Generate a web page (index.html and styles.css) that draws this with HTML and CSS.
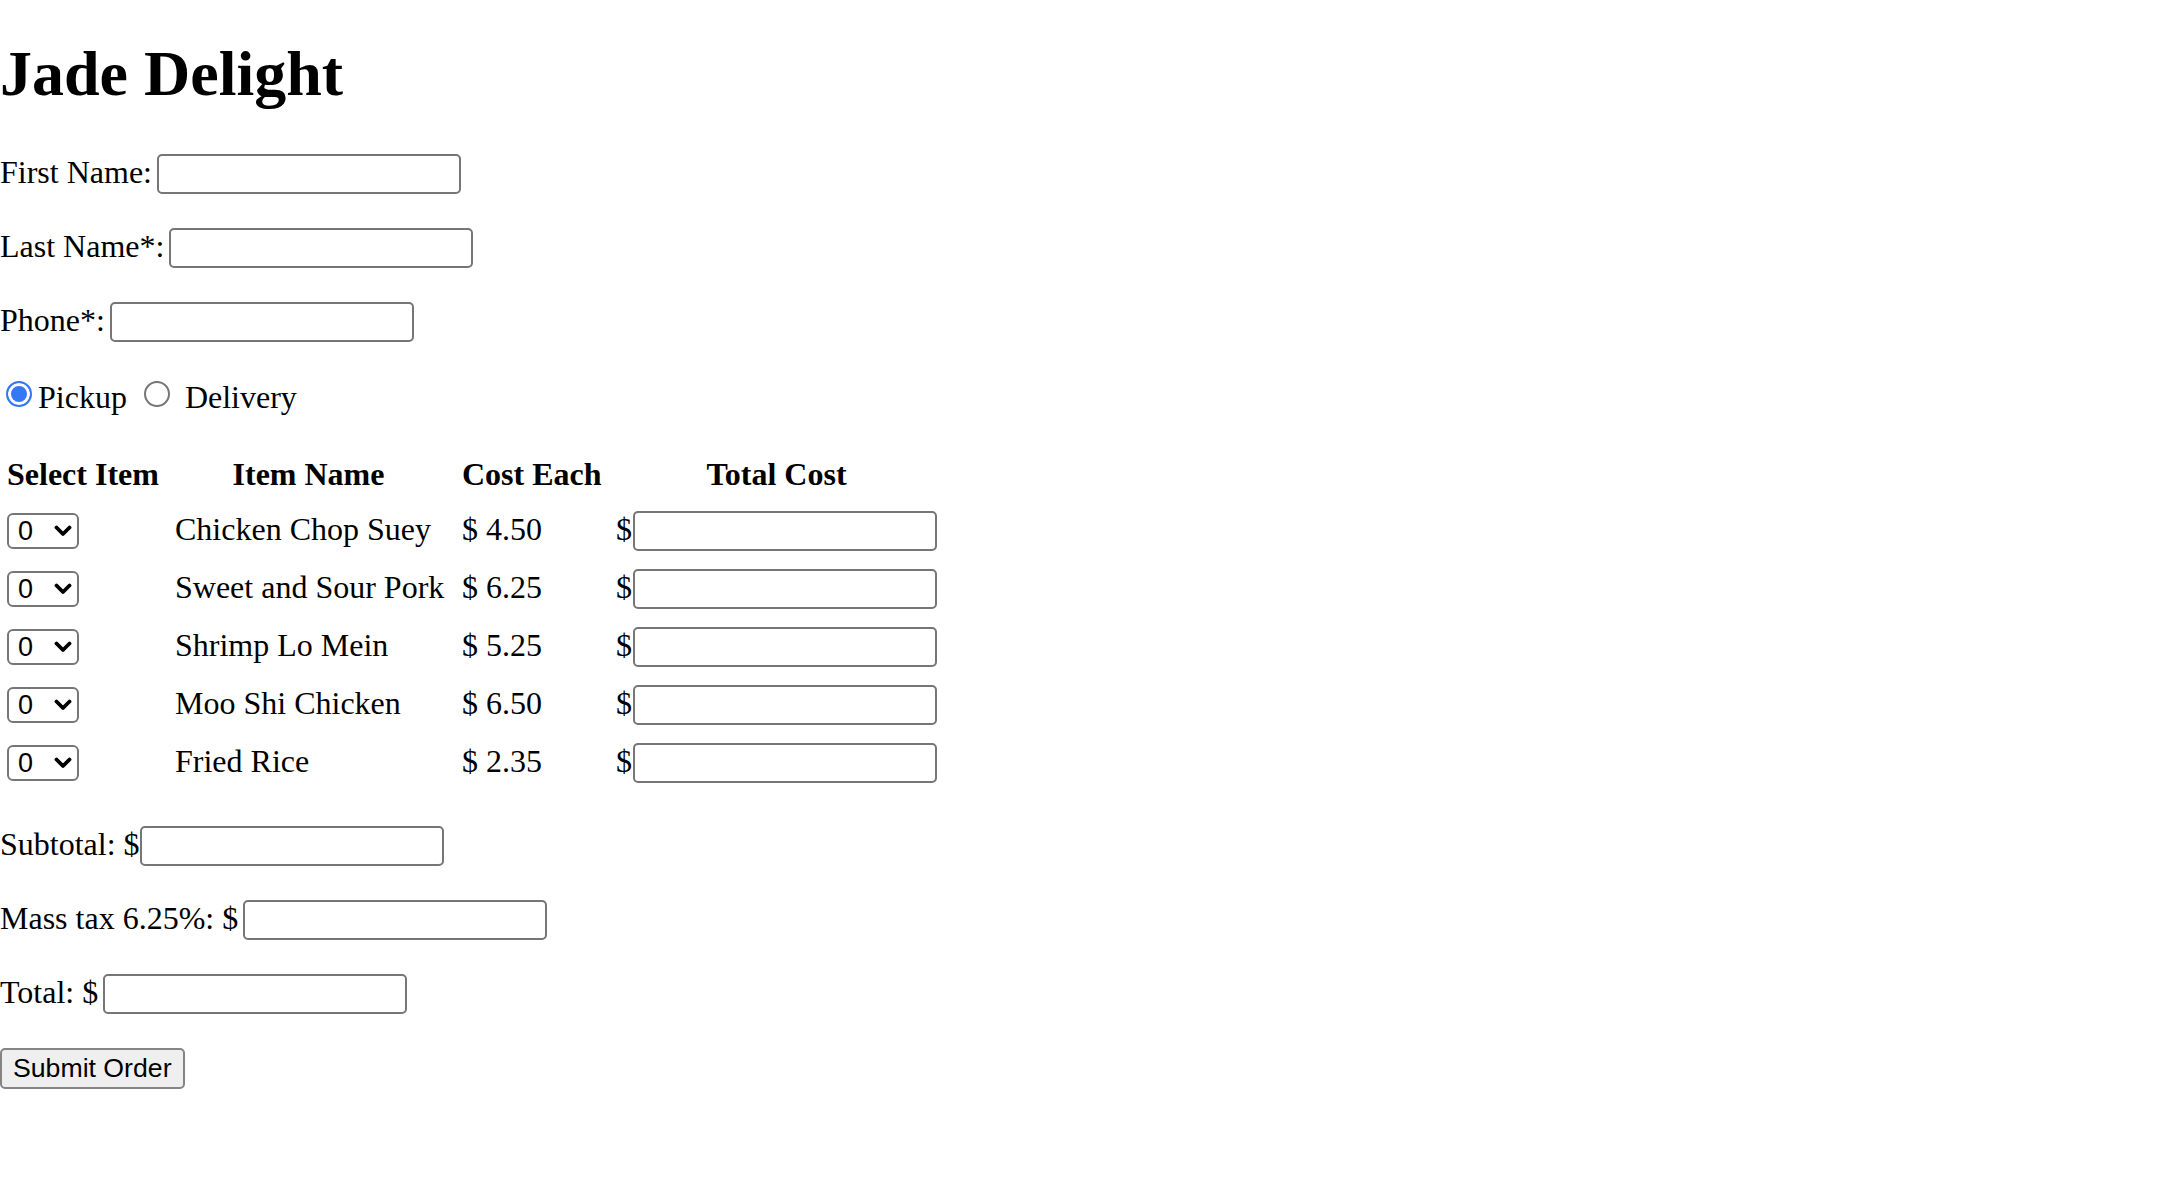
FILE: index.html
```html
<!DOCTYPE html>
<html lang="en">
<head>
<meta charset="utf-8">
<title>Jade Delight</title>
<link rel="stylesheet" href="styles.css">
</head>
<body>
<h1 class="title">Jade Delight</h1>
<form class="order">
  <div class="field">
    <label class="label" for="fname">First Name:</label>
    <input class="text-input" type="text" id="fname">
  </div>
  <div class="field">
    <label class="label" for="lname">Last Name*:</label>
    <input class="text-input" type="text" id="lname">
  </div>
  <div class="field">
    <label class="label" for="phone">Phone*:</label>
    <input class="text-input" type="text" id="phone">
  </div>
  <div class="radio-row">
    <input class="radio radio-first" type="radio" name="method" id="pickup" checked>
    <label class="radio-label" for="pickup">Pickup</label>
    <input class="radio radio-second" type="radio" name="method" id="delivery">
    <label class="radio-label" for="delivery">Delivery</label>
  </div>
  <table class="menu">
    <thead>
      <tr class="head-row">
        <th class="col-select">Select Item</th>
        <th class="col-name head-name">Item Name</th>
        <th class="col-cost">Cost Each</th>
        <th class="col-total head-total">Total Cost</th>
      </tr>
    </thead>
    <tbody>
      <tr class="item-row">
        <td class="col-select"><div class="sel"><select class="qty"><option>0</option><option>1</option><option>2</option></select><svg class="chev" width="18" height="12" viewBox="0 0 18 12"><polyline points="2.5,2.5 9,9 15.5,2.5" fill="none" stroke="#000" stroke-width="3.8" stroke-linecap="round" stroke-linejoin="round"/></svg></div></td>
        <td class="col-name cell-text">Chicken Chop Suey</td>
        <td class="col-cost cell-text">$ 4.50</td>
        <td class="col-total"><div class="total-cell"><span class="dollar">$</span><input class="text-input" type="text"></div></td>
      </tr>
      <tr class="item-row">
        <td class="col-select"><div class="sel"><select class="qty"><option>0</option><option>1</option><option>2</option></select><svg class="chev" width="18" height="12" viewBox="0 0 18 12"><polyline points="2.5,2.5 9,9 15.5,2.5" fill="none" stroke="#000" stroke-width="3.8" stroke-linecap="round" stroke-linejoin="round"/></svg></div></td>
        <td class="col-name cell-text">Sweet and Sour Pork</td>
        <td class="col-cost cell-text">$ 6.25</td>
        <td class="col-total"><div class="total-cell"><span class="dollar">$</span><input class="text-input" type="text"></div></td>
      </tr>
      <tr class="item-row">
        <td class="col-select"><div class="sel"><select class="qty"><option>0</option><option>1</option><option>2</option></select><svg class="chev" width="18" height="12" viewBox="0 0 18 12"><polyline points="2.5,2.5 9,9 15.5,2.5" fill="none" stroke="#000" stroke-width="3.8" stroke-linecap="round" stroke-linejoin="round"/></svg></div></td>
        <td class="col-name cell-text">Shrimp Lo Mein</td>
        <td class="col-cost cell-text">$ 5.25</td>
        <td class="col-total"><div class="total-cell"><span class="dollar">$</span><input class="text-input" type="text"></div></td>
      </tr>
      <tr class="item-row">
        <td class="col-select"><div class="sel"><select class="qty"><option>0</option><option>1</option><option>2</option></select><svg class="chev" width="18" height="12" viewBox="0 0 18 12"><polyline points="2.5,2.5 9,9 15.5,2.5" fill="none" stroke="#000" stroke-width="3.8" stroke-linecap="round" stroke-linejoin="round"/></svg></div></td>
        <td class="col-name cell-text">Moo Shi Chicken</td>
        <td class="col-cost cell-text">$ 6.50</td>
        <td class="col-total"><div class="total-cell"><span class="dollar">$</span><input class="text-input" type="text"></div></td>
      </tr>
      <tr class="item-row">
        <td class="col-select"><div class="sel"><select class="qty"><option>0</option><option>1</option><option>2</option></select><svg class="chev" width="18" height="12" viewBox="0 0 18 12"><polyline points="2.5,2.5 9,9 15.5,2.5" fill="none" stroke="#000" stroke-width="3.8" stroke-linecap="round" stroke-linejoin="round"/></svg></div></td>
        <td class="col-name cell-text">Fried Rice</td>
        <td class="col-cost cell-text">$ 2.35</td>
        <td class="col-total"><div class="total-cell"><span class="dollar">$</span><input class="text-input" type="text"></div></td>
      </tr>
    </tbody>
  </table>
  <div class="field field-flush">
    <label class="label" for="subtotal">Subtotal: $</label>
    <input class="text-input" type="text" id="subtotal">
  </div>
  <div class="field">
    <label class="label" for="tax">Mass tax 6.25%: $</label>
    <input class="text-input" type="text" id="tax">
  </div>
  <div class="field">
    <label class="label" for="total">Total: $</label>
    <input class="text-input" type="text" id="total">
  </div>
  <button class="submit" type="button">Submit Order</button>
</form>
</body>
</html>
```

FILE: styles.css
```css
html, body {
  margin: 0;
  padding: 0;
  background: #ffffff;
}

body {
  font-family: "Liberation Serif", "Times New Roman", serif;
  font-size: 32px;
  color: #000000;
}

.title {
  font-size: 64px;
  font-weight: bold;
  line-height: 72px;
  margin: 38px 0 44px 0;
}

.order {
  display: flex;
  flex-direction: column;
  align-items: flex-start;
  gap: 34px;
}

.field {
  display: flex;
  align-items: center;
  gap: 5px;
  height: 40px;
}

.field-flush {
  gap: 0;
}

.label {
  padding-bottom: 3px;
  white-space: pre;
}

.text-input {
  box-sizing: border-box;
  width: 304px;
  height: 40px;
  margin: 0;
  padding: 0 4px;
  border: 2px solid #767676;
  border-radius: 5px;
  background: #ffffff;
  font-family: "Liberation Sans", Arial, sans-serif;
  font-size: 26px;
}

.radio-row {
  display: flex;
  align-items: center;
  height: 36px;
}

.radio {
  appearance: none;
  -webkit-appearance: none;
  box-sizing: border-box;
  width: 26px;
  height: 26px;
  margin: 0;
  border: 2px solid #767676;
  border-radius: 50%;
  background: #ffffff;
}

.radio:checked {
  border-color: #3478f6;
  background: #3478f6;
  box-shadow: inset 0 0 0 3px #ffffff;
}

.radio-first {
  margin-left: 6px;
  margin-right: 6px;
}

.radio-second {
  margin-left: 17px;
  margin-right: 15px;
}

.radio-label {
  padding-top: 6px;
}

.menu {
  border-spacing: 0;
  margin-left: 7px;
}

.menu th,
.menu td {
  padding: 0;
}

.head-row {
  height: 56px;
}

.menu th {
  font-weight: bold;
  vertical-align: middle;
  text-align: left;
}

.item-row {
  height: 58px;
}

.menu td {
  vertical-align: middle;
}

.col-select {
  width: 168px;
}

.col-name {
  width: 287px;
}

.col-cost {
  width: 154px;
}

.col-total {
  width: 321px;
}

.head-name {
  text-align: center !important;
  padding-right: 20px !important;
  box-sizing: border-box;
}

.head-total {
  text-align: center !important;
}

.cell-text {
  padding-bottom: 4px !important;
  white-space: nowrap;
}

.sel {
  position: relative;
  width: 72px;
  height: 36px;
}

.qty {
  appearance: none;
  -webkit-appearance: none;
  display: block;
  box-sizing: border-box;
  width: 72px;
  height: 36px;
  margin: 0;
  padding: 0 0 0 9px;
  border: 2px solid #767676;
  border-radius: 6px;
  background: #ffffff;
  color: #000000;
  font-family: "Liberation Sans", Arial, sans-serif;
  font-size: 27px;
}

.chev {
  position: absolute;
  right: 7px;
  top: 12px;
  pointer-events: none;
}

.total-cell {
  display: flex;
  align-items: center;
}

.dollar {
  padding-bottom: 4px;
  margin-right: 1px;
}

.submit {
  box-sizing: border-box;
  height: 41px;
  margin: 0;
  padding: 0 11px;
  border: 2px solid #858585;
  border-radius: 5px;
  background: #efefef;
  color: #000000;
  font-family: "Liberation Sans", Arial, sans-serif;
  font-size: 26.67px;
}
```
